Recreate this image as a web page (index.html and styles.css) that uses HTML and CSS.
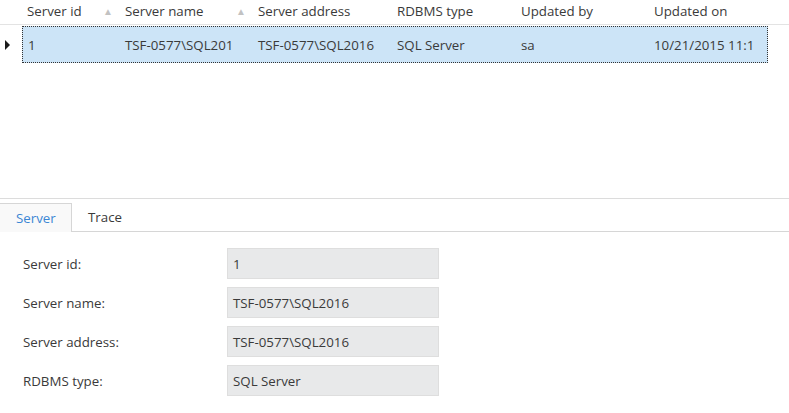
FILE: index.html
```html
<!DOCTYPE html>
<html>
<head>
<meta charset="utf-8">
<link rel="stylesheet" href="styles.css">
</head>
<body>
<div class="grid">
  <div class="head">
    <div class="rh"></div>
    <div class="hc c1">Server id<span class="sort">&#9650;</span></div>
    <div class="hc c2">Server name<span class="sort">&#9650;</span></div>
    <div class="hc c3">Server address</div>
    <div class="hc c4">RDBMS type</div>
    <div class="hc c5">Updated by</div>
    <div class="hc c6">Updated on</div>
  </div>
  <div class="row">
    <div class="rh"><span class="ptr"></span></div>
    <div class="sel">
      <div class="cell c1">1</div>
      <div class="cell c2">TSF-0577\SQL201</div>
      <div class="cell c3">TSF-0577\SQL2016</div>
      <div class="cell c4">SQL Server</div>
      <div class="cell c5">sa</div>
      <div class="cell c6">10/21/2015 11:1</div>
    </div>
  </div>
</div>
<div class="tabs">
  <div class="tab active">Server</div>
  <div class="tab">Trace</div>
  <div class="tabfill"></div>
</div>
<div class="form">
  <div class="frow"><div class="lbl">Server id:</div><div class="inp">1</div></div>
  <div class="frow"><div class="lbl">Server name:</div><div class="inp">TSF-0577\SQL2016</div></div>
  <div class="frow"><div class="lbl">Server address:</div><div class="inp">TSF-0577\SQL2016</div></div>
  <div class="frow"><div class="lbl">RDBMS type:</div><div class="inp">SQL Server</div></div>
</div>
</body>
</html>
```
FILE: styles.css
```css
* { box-sizing: border-box; }
html, body { margin: 0; padding: 0; background: #fff; }
body {
  width: 789px; height: 413px; overflow: hidden;
  font-family: "Open Sans", "Noto Sans", sans-serif;
  font-size: 13.3px; color: #3a3a3a;
}
.grid { height: 199px; border-bottom: 1px solid #dcdcdc; }
.head { display: flex; height: 25px; align-items: center; border-bottom: 1px solid #e3e3e3; padding-bottom: 3px; }
.hc { display: flex; align-items: center; white-space: nowrap; overflow: hidden; padding-left: 5px; }
.rh { width: 22px; flex: none; display: flex; align-items: center; }
.c1 { width: 98px; }
.c2 { width: 133px; }
.c3 { width: 139px; }
.c4 { width: 124px; }
.c5 { width: 133px; }
.c6 { width: 119px; }
.sort { color: #c2c2c2; font-size: 10px; margin-left: auto; margin-right: 7px; }
.row { display: flex; height: 37px; margin-top: 1px; }
.row .rh { padding-left: 5px; }
.ptr { width: 0; height: 0; border-top: 5px solid transparent; border-bottom: 5px solid transparent; border-left: 5px solid #1a1a1a; }
.sel {
  display: flex; align-items: center; width: 746px;
  background: #cce4f7; border: 1px dotted #333;
}
.cell { white-space: nowrap; overflow: hidden; padding-left: 5px; }
.sel .c1 { width: 97px; }
.sel .c6 { width: 118px; }
.tabs { display: flex; height: 33px; align-items: flex-end; }
.tab {
  height: 29px; padding: 0 16px; display: flex; align-items: center;
  border-bottom: 1px solid #d6d6d6;
}
.tab.active {
  width: 72px; border: 1px solid #d6d6d6; border-left: none; border-bottom: none;
  background: #f9f9f9; color: #3b86d4;
}
.tabfill { flex: 1; height: 29px; border-bottom: 1px solid #d6d6d6; }
.form { display: flex; flex-direction: column; gap: 8px; padding: 16px 0 0 23px; }
.frow { display: flex; align-items: center; height: 31px; }
.lbl { width: 204px; }
.inp {
  width: 212px; height: 31px; background: #e8e9ea; border: 1px solid #dedede;
  display: flex; align-items: center; padding-left: 5px;
}
```
